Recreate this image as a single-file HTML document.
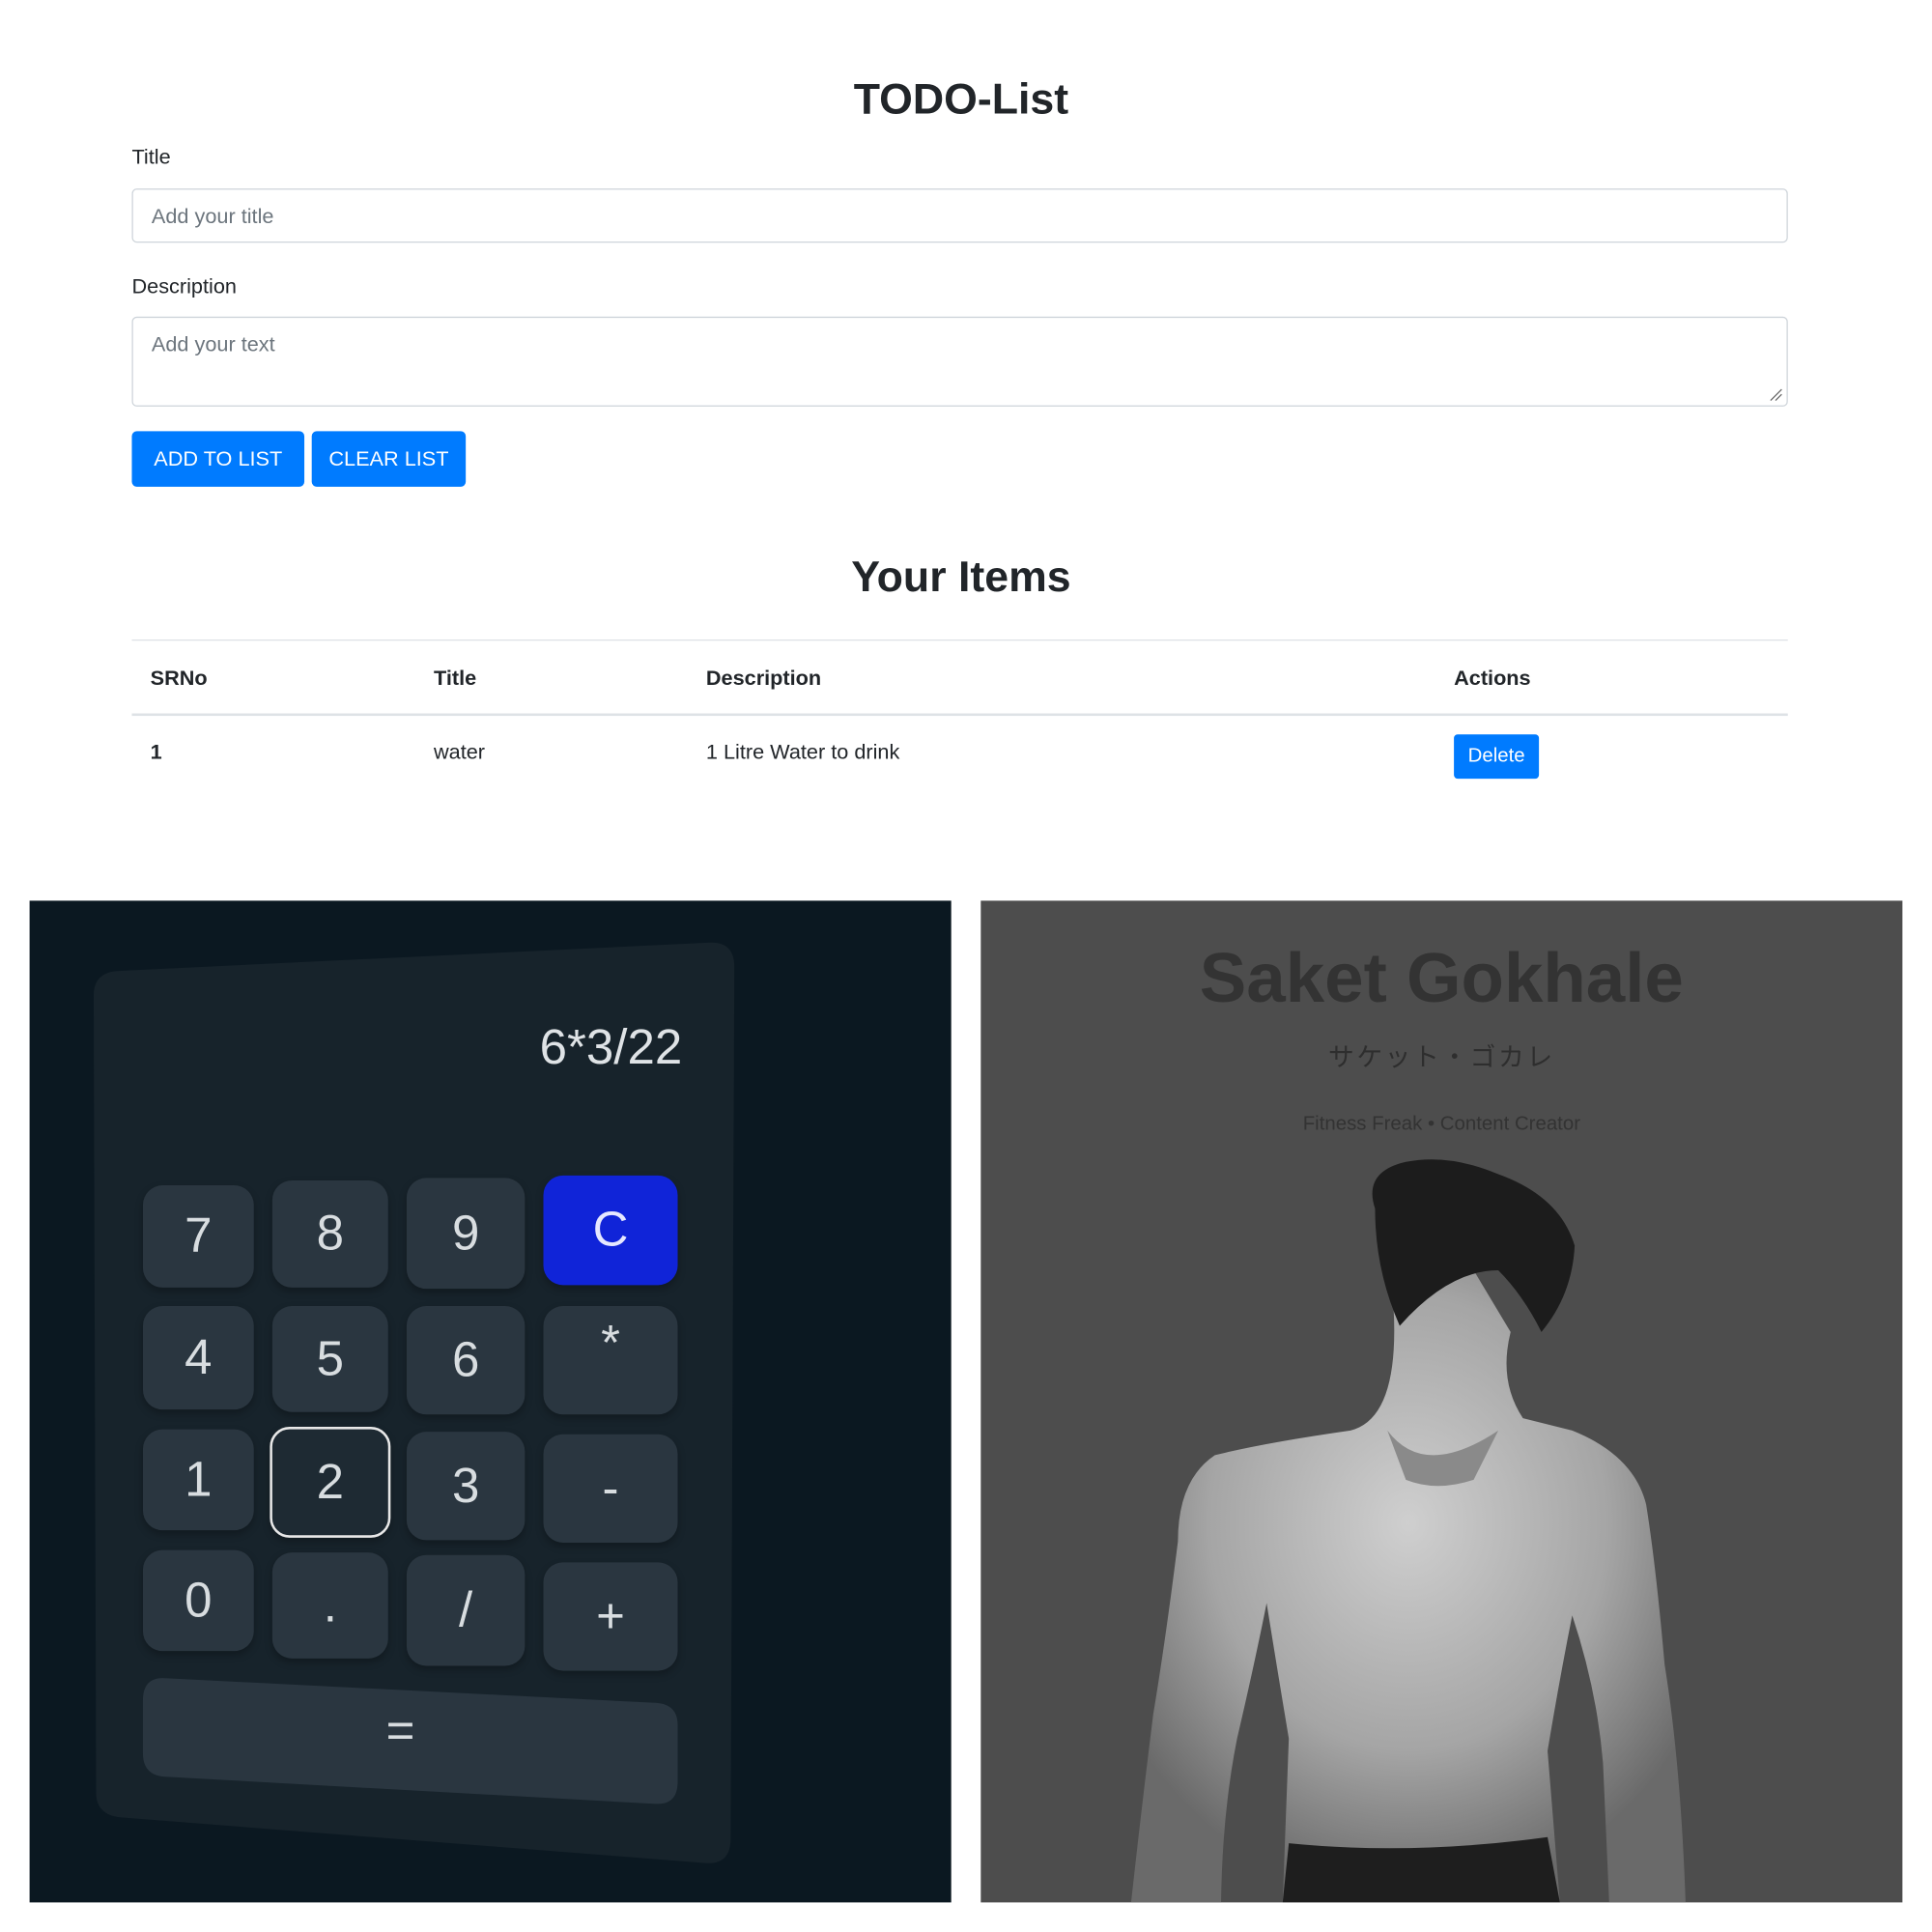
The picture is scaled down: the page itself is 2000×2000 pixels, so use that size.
<!DOCTYPE html>
<html><head><meta charset="utf-8"><style>
html,body{margin:0;padding:0;background:#fff;}
#w{position:relative;width:1568px;height:1568px;transform:scale(1.27551);transform-origin:0 0;font-family:"Liberation Sans",sans-serif;color:#212529;overflow:hidden}
.a{position:absolute}
.h{font-size:35px;font-weight:bold;width:1560px;text-align:center;left:0}
.lbl{font-size:17px;left:107px}
.in{left:107px;width:1344px;border:1px solid #ced4da;border-radius:4px;background:#fff;box-sizing:border-box;}
.ph{color:#6c757d;font-size:17px;position:absolute;left:15px}
.btn{background:#007bff;color:#fff;font-size:17px;border-radius:4px;text-align:center;line-height:45px;height:45px}
.th{font-weight:bold;font-size:17px;top:541px}
.td{font-size:17px;top:601px}
.k{position:absolute;background:#2a3640;border-radius:16px;color:#d8dde0;text-align:center;font-size:40px;display:flex;align-items:center;justify-content:center;box-shadow:0 3px 6px rgba(0,0,0,.25)}
</style></head><body><div id="w">
<div class="a h" style="top:61px">TODO-List</div>
<div class="a lbl" style="top:118px">Title</div>
<div class="a in" style="top:153px;height:44px"><span class="ph" style="top:12px">Add your title</span></div>
<div class="a lbl" style="top:223px">Description</div>
<div class="a in" style="top:257px;height:73px"><span class="ph" style="top:12px">Add your text</span>
<svg class="a" style="right:3px;bottom:3px" width="12" height="12"><path d="M2 11L11 2M6 11L11 6" stroke="#666" stroke-width="1"/></svg></div>
<div class="a btn" style="left:107px;top:350px;width:140px">ADD TO LIST</div>
<div class="a btn" style="left:253px;top:350px;width:125px">CLEAR LIST</div>
<div class="a h" style="top:449px">Your Items</div>
<div class="a" style="left:107px;top:519px;width:1344px;height:1px;background:#dee2e6"></div>
<div class="a th" style="left:122px">SRNo</div>
<div class="a th" style="left:352px">Title</div>
<div class="a th" style="left:573px">Description</div>
<div class="a th" style="left:1180px">Actions</div>
<div class="a" style="left:107px;top:579px;width:1344px;height:2px;background:#dee2e6"></div>
<div class="a td" style="left:122px;font-weight:bold">1</div>
<div class="a td" style="left:352px">water</div>
<div class="a td" style="left:573px">1 Litre Water to drink</div>
<div class="a btn" style="left:1180px;top:596px;width:69px;height:36px;line-height:36px;font-size:16px;border-radius:3px">Delete</div>

<div class="a" style="left:24px;top:731px;width:748px;height:813px;background:#0b1821"></div>
<svg class="a" style="left:0;top:0" width="1560" height="1560"><path d="M96 788 L576 765 Q596 764 596 785 L593 1492 Q593 1514 572 1512 L98 1475 Q78 1473 78 1455 L76 808 Q76 789 96 788Z" fill="#17232b"/></svg>
<div class="a" style="left:438px;top:828px;font-size:40px;color:#dfe3e6">6*3/22</div>
<div class="k" style="left:116px;top:962px;width:90px;height:83px">7</div>
<div class="k" style="left:221px;top:958px;width:94px;height:87px">8</div>
<div class="k" style="left:330px;top:956px;width:96px;height:90px">9</div>
<div class="k" style="left:441px;top:954px;width:109px;height:89px;background:#1024d8;color:#e6e8ff">C</div>
<div class="k" style="left:116px;top:1060px;width:90px;height:84px">4</div>
<div class="k" style="left:221px;top:1060px;width:94px;height:86px">5</div>
<div class="k" style="left:330px;top:1060px;width:96px;height:88px">6</div>
<div class="k" style="left:441px;top:1060px;width:109px;height:88px;align-items:flex-start;padding-top:8px;box-sizing:border-box">*</div>
<div class="k" style="left:116px;top:1160px;width:90px;height:82px">1</div>
<div class="k" style="left:219px;top:1158px;width:98px;height:90px;border:2px solid #e8e8e8;box-sizing:border-box;background:#1e2a33">2</div>
<div class="k" style="left:330px;top:1162px;width:96px;height:88px">3</div>
<div class="k" style="left:441px;top:1164px;width:109px;height:88px">-</div>
<div class="k" style="left:116px;top:1258px;width:90px;height:82px">0</div>
<div class="k" style="left:221px;top:1260px;width:94px;height:86px">.</div>
<div class="k" style="left:330px;top:1262px;width:96px;height:90px">/</div>
<div class="k" style="left:441px;top:1268px;width:109px;height:88px">+</div>
<svg class="a" style="left:0;top:0" width="1560" height="1560"><path d="M134 1362 L532 1382 Q550 1383 550 1400 L550 1446 Q550 1465 532 1464 L134 1442 Q116 1441 116 1423 L116 1380 Q116 1361 134 1362Z" fill="#2a3640"/><text x="325" y="1418" font-size="40" fill="#d8dde0" text-anchor="middle" font-family="Liberation Sans">=</text></svg>

<div class="a" style="left:796px;top:731px;width:748px;height:813px;background:#4d4d4d;overflow:hidden">
<div class="a" style="left:0;width:748px;text-align:center;top:30px;font-size:57px;font-weight:bold;color:#333">Saket Gokhale</div>
<div class="a" style="left:0;width:748px;text-align:center;top:111px;font-size:21px;color:#2e2e2e;font-family:'Liberation Sans','Noto Sans CJK JP',sans-serif;letter-spacing:2px">サケット・ゴカレ</div>
<div class="a" style="left:0;width:748px;text-align:center;top:173px;font-size:16px;color:#333">Fitness Freak • Content Creator</div>
<svg class="a" style="left:0;top:0" width="748" height="813">
<defs><radialGradient id="g" cx="0.5" cy="0.4" r="0.6"><stop offset="0" stop-color="#cfcfcf"/><stop offset="0.6" stop-color="#a5a5a5"/><stop offset="1" stop-color="#6a6a6a"/></radialGradient></defs>
<path d="M335 330 Q340 420 300 430 Q230 440 190 450 Q160 470 160 520 Q150 600 140 660 Q130 740 122 813 L195 813 Q196 740 208 680 Q222 620 232 570 Q240 620 250 680 L245 813 L470 813 L460 690 Q470 630 480 580 Q500 640 505 700 L510 813 L572 813 Q568 700 555 620 Q548 540 540 490 Q530 450 480 430 L440 420 Q420 390 430 350 L400 300 Q360 300 335 330Z" fill="url(#g)"/>
<path d="M330 430 Q360 470 420 430 L400 470 Q370 480 345 470Z" fill="#8a8a8a"/>
<path d="M320 250 Q310 220 345 212 Q380 205 420 222 Q470 240 482 280 Q480 320 455 350 Q440 320 420 300 Q380 300 340 345 Q320 300 320 250Z" fill="#1c1c1c"/>
<path d="M250 765 Q350 775 460 760 L470 813 L245 813Z" fill="#1e1e1e"/>
</svg>
</div>
</div></body></html>
